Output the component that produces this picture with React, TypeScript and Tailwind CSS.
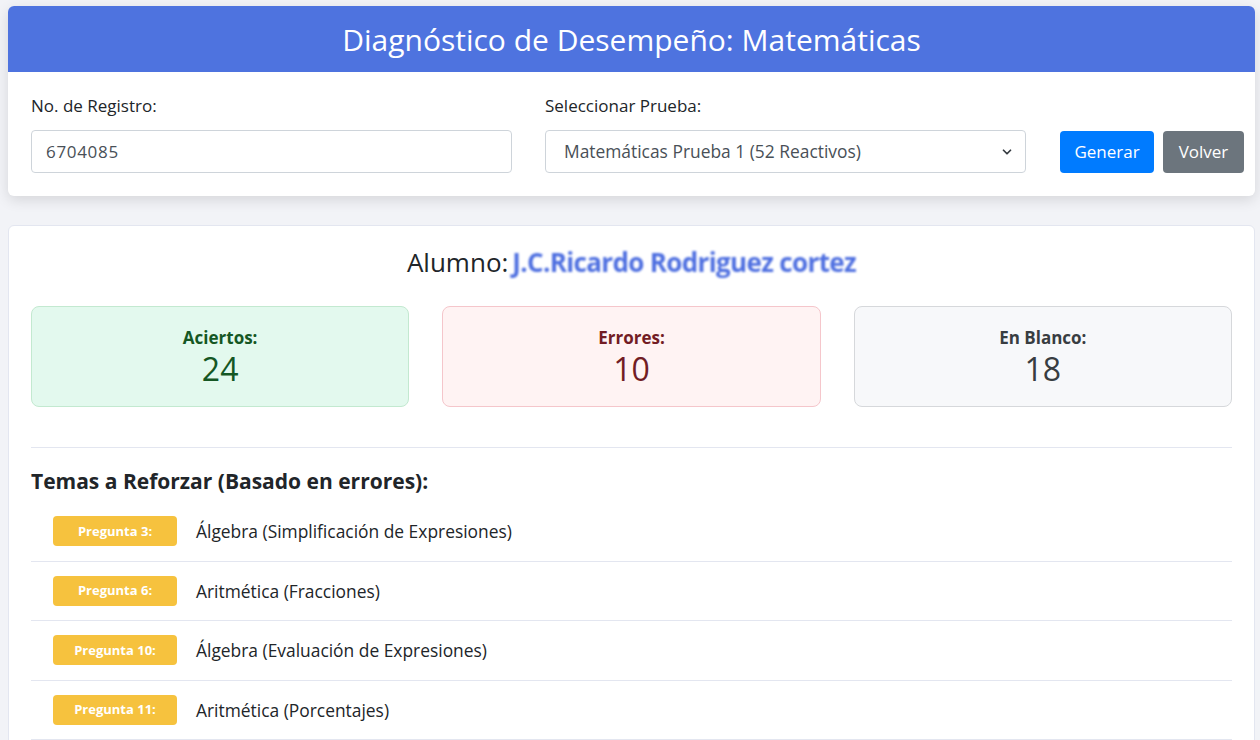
import { ChevronDown } from "lucide-react";

const temas = [
  { q: 3, tema: "Álgebra (Simplificación de Expresiones)" },
  { q: 6, tema: "Aritmética (Fracciones)" },
  { q: 10, tema: "Álgebra (Evaluación de Expresiones)" },
  { q: 11, tema: "Aritmética (Porcentajes)" },
];

const stats = [
  { label: "Aciertos:", value: 24, box: "bg-[#e3f9ee] border-[#c3e9d0] text-[#155724]" },
  { label: "Errores:", value: 10, box: "bg-[#fff3f3] border-[#f5c6cb] text-[#721c24]" },
  { label: "En Blanco:", value: 18, box: "bg-[#f7f8fa] border-[#d6d8db] text-[#383d41]" },
];

const App = () => {
  return (
    <div className="min-h-screen bg-[#f2f3f7] pt-[6px] pl-2 pr-[5px] font-['Open_Sans',sans-serif] text-[#212529]">
      <div className="bg-white rounded-md overflow-hidden shadow-[0_4px_14px_rgba(0,0,0,0.12)]">
        <div className="h-[66px] bg-[#4e73df] flex items-center justify-center text-white text-[30px]">
          Diagnóstico de Desempeño: Matemáticas
        </div>
        <div className="pl-[23px] pr-[11px] pt-[22px] pb-[23px] flex items-end">
          <div className="w-[481px] shrink-0">
            <label className="block text-[17px] leading-6 mb-3">No. de Registro:</label>
            <input
              defaultValue="6704085"
              className="w-full h-[43px] border border-[#ced4da] rounded px-[14px] text-[17px] tracking-[0.04em] text-[#495057] outline-none"
            />
          </div>
          <div className="w-[481px] shrink-0 ml-[33px]">
            <label className="block text-[17px] leading-6 mb-3">Seleccionar Prueba:</label>
            <div className="relative">
              <select className="w-full h-[43px] border border-[#ced4da] rounded pl-[18px] pr-8 text-[17.4px] text-[#495057] bg-white appearance-none outline-none">
                <option>Matemáticas Prueba 1 (52 Reactivos)</option>
              </select>
              <ChevronDown className="absolute right-[12px] top-[15px] w-[14px] h-[14px] text-[#343a40] pointer-events-none" strokeWidth={3} />
            </div>
          </div>
          <div className="ml-[34px] flex gap-[9px]">
            <button className="h-[42px] w-[94px] rounded bg-[#007bff] text-white text-[17px]">Generar</button>
            <button className="h-[42px] w-[81px] rounded bg-[#6c757d] text-white text-[17px]">Volver</button>
          </div>
        </div>
      </div>

      <div className="mt-[29px] bg-white border border-[#e3e6f0] rounded-md px-[22px] pt-[18px]">
        <div className="text-center text-[26px] leading-9">
          Alumno:
          <span className="ml-1 text-[#4e6fe0] blur-[1.3px] font-bold tracking-tight">J.C.Ricardo Rodriguez cortez</span>
        </div>

        <div className="mt-[26px] grid grid-cols-3 gap-[33px]">
          {stats.map((s) => (
            <div key={s.label} className={`h-[101px] border rounded-lg flex flex-col items-center pt-[19px] ${s.box}`}>
              <div className="text-[17px] leading-6 font-bold">{s.label}</div>
              <div className="text-[32px] leading-[38px]">{s.value}</div>
            </div>
          ))}
        </div>

        <hr className="mt-[40px] border-[#e3e6f0]" />

        <h3 className="mt-[19px] text-[21px] leading-7 font-bold">Temas a Reforzar (Basado en errores):</h3>

        <ul className="mt-[7px] pb-4">
          {temas.map((t) => (
            <li key={t.q} className="h-[59.5px] border-b border-[#e3e6f0] pl-[22px] flex items-center">
              <span className="w-[124px] h-[30px] rounded bg-[#f6c23e] text-white text-[13px] font-bold flex items-center justify-center">
                Pregunta {t.q}:
              </span>
              <span className="ml-[19px] text-[17.4px]">{t.tema}</span>
            </li>
          ))}
        </ul>
      </div>
    </div>
  );
};

export default App;
